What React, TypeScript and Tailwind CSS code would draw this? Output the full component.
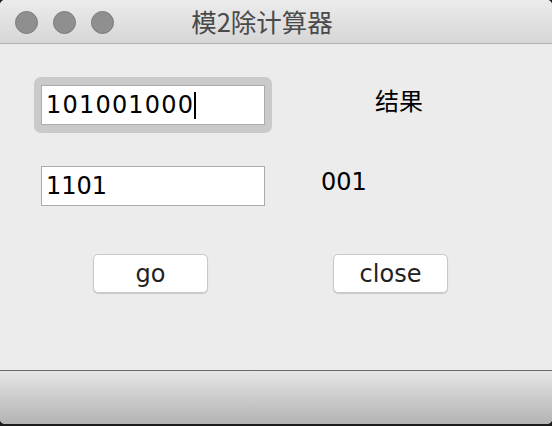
import React from "react";

const font = "font-['DejaVu_Sans','Noto_Sans_CJK_SC',sans-serif]";
const cjk = "font-['Noto_Sans_CJK_SC',sans-serif]";

const Light = () => (
  <div className="w-[23px] h-[23px] rounded-full bg-[#8f8f8f] border border-[#7b7b7b]" />
);

const Feld = ({ waarde, cursor }: { waarde: string; cursor?: boolean }) => (
  <div
    className={`w-[224px] h-[40px] bg-white border border-[#acacac] pl-[4px] flex items-center text-[24px] text-black ${font}`}
  >
    <span className={`leading-none ${cursor ? "tracking-[1.2px]" : ""}`}>{waarde}</span>
    {cursor && <span className="w-[2px] h-[27px] bg-black" />}
  </div>
);

const Knop = ({ label }: { label: string }) => (
  <button
    className={`w-[115px] h-[39px] bg-white rounded-[5px] border border-[#c8c8c8] shadow-[0_1px_1px_rgba(0,0,0,0.15)] text-[24px] leading-none text-[#222] ${font}`}
  >
    {label}
  </button>
);

export default function App() {
  return (
    <div className="w-[552px] h-[426px] bg-[#1c1c1c] overflow-hidden">
      <div className="w-[552px] h-[424px] rounded-[5px] overflow-hidden flex flex-col bg-[#ececec]">
        <div className="h-[44px] shrink-0 bg-gradient-to-b from-[#ececec] to-[#d6d6d6] border-b border-[#b1b1b1] flex items-center relative">
          <div className="flex gap-[15px] pl-[15px] pt-[1px]">
            <Light />
            <Light />
            <Light />
          </div>
          <div
            className={`absolute inset-0 pr-[28px] flex items-center justify-center text-[25.5px] text-[#4a4a4a] ${cjk}`}
          >
            模2除计算器
          </div>
        </div>

        <div className="flex-1 pl-[41px] pt-[41px]">
          <div className="flex items-start">
            <div className="-ml-[7px] -my-[8px] px-[7px] py-[8px] bg-[#cacaca] rounded-[7px]">
              <Feld waarde="101001000" cursor />
            </div>
            <div
              className={`ml-[103px] mt-[1px] text-[24px] leading-[28px] text-black ${cjk}`}
            >
              结果
            </div>
          </div>
          <div className="flex items-start mt-[41px]">
            <Feld waarde="1101" />
            <div className={`ml-[56px] mt-[4px] text-[24px] leading-[24px] text-black ${font}`}>
              001
            </div>
          </div>
          <div className="flex mt-[48px] pl-[52px] gap-[125px]">
            <Knop label="go" />
            <Knop label="close" />
          </div>
        </div>

        <div className="h-[54px] shrink-0 border-t border-[#6a6a6a] bg-gradient-to-b from-[#e6e6e6] to-[#b3b3b3]" />
      </div>
    </div>
  );
}
